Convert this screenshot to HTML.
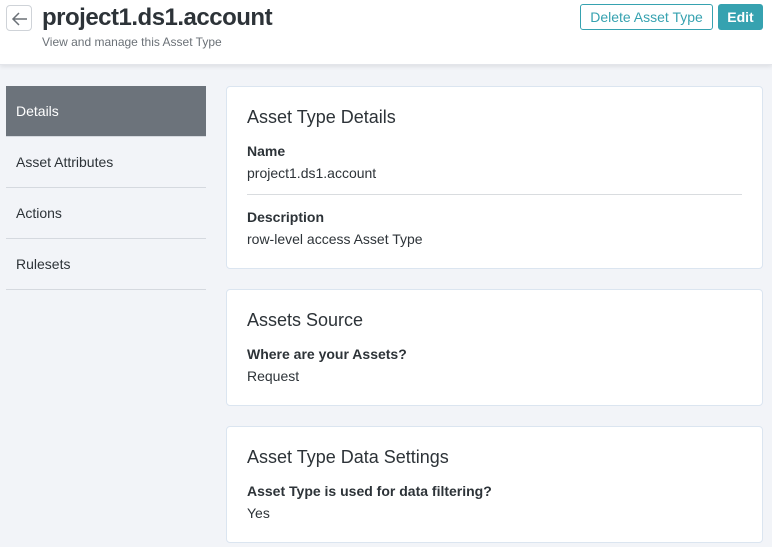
<!DOCTYPE html>
<html><head><style>
*{box-sizing:border-box;margin:0;padding:0}
body{width:772px;height:547px;overflow:hidden;background:#f2f4f8;font-family:"Liberation Sans",Arial,sans-serif;color:#2d3338;position:relative}
.hdr{position:absolute;left:0;top:0;width:772px;height:65px;background:#fff;box-shadow:0 2px 4px rgba(0,0,0,.08);border-bottom:1px solid #e3e5ea}
.back{position:absolute;left:6px;top:5px;width:26px;height:26px;border:1px solid #cfd3d8;border-radius:4px;background:#fff}
h1{position:absolute;left:42px;top:4px;font-size:24px;font-weight:bold;color:#2d3338;letter-spacing:-0.5px}
.sub{position:absolute;left:42px;top:35px;font-size:12px;color:#6b7177}
.btn1{position:absolute;left:580px;top:4px;width:133px;height:26px;border:1px solid #36a2b0;border-radius:3px;color:#36a2b0;font-size:14px;text-align:center;line-height:24px;background:#fff}
.btn2{position:absolute;left:718px;top:4px;width:45px;height:26px;background:#36a2b0;border-radius:3px;color:#fff;font-weight:bold;font-size:14px;text-align:center;line-height:26px}
.nav{position:absolute;left:6px;width:200px;height:51px;font-size:14px;padding-left:10px;line-height:50px;color:#2d3338;border-bottom:1px solid #d5d9df}
.nav.act{background:#6c737b;color:#fff;border-bottom:1px solid #d5d9df}
.card{position:absolute;left:226px;width:537px;background:#fff;border:1px solid #dbe5f0;border-radius:4px;padding:0 20px}
.card h2{font-weight:normal;font-size:18px;color:#2d3338;margin-top:20px}
.lbl{font-weight:bold;font-size:14px;margin-top:15px}
.val{font-size:14px;margin-top:6px}
hr{border:0;border-top:1px solid #d9dcdf;margin-top:13px}
</style></head><body>
<div class="hdr">
<div class="back"><svg width="26" height="26" viewBox="0 0 26 26"><path d="M20 13H6M12 7l-6 6 6 6" stroke="#6b7177" stroke-width="1.5" fill="none"/></svg></div>
<h1>project1.ds1.account</h1>
<div class="sub">View and manage this Asset Type</div>
<div class="btn1">Delete Asset Type</div>
<div class="btn2">Edit</div>
</div>
<div class="nav act" style="top:86px">Details</div>
<div class="nav" style="top:137px">Asset Attributes</div>
<div class="nav" style="top:188px">Actions</div>
<div class="nav" style="top:239px">Rulesets</div>
<div class="card" style="top:86px;height:183px">
<h2>Asset Type Details</h2>
<div class="lbl">Name</div><div class="val">project1.ds1.account</div>
<hr>
<div class="lbl" style="margin-top:14px">Description</div><div class="val">row-level access Asset Type</div>
</div>
<div class="card" style="top:289px;height:117px">
<h2>Assets Source</h2>
<div class="lbl">Where are your Assets?</div><div class="val">Request</div>
</div>
<div class="card" style="top:426px;height:117px">
<h2>Asset Type Data Settings</h2>
<div class="lbl">Asset Type is used for data filtering?</div><div class="val">Yes</div>
</div>
</body></html>
